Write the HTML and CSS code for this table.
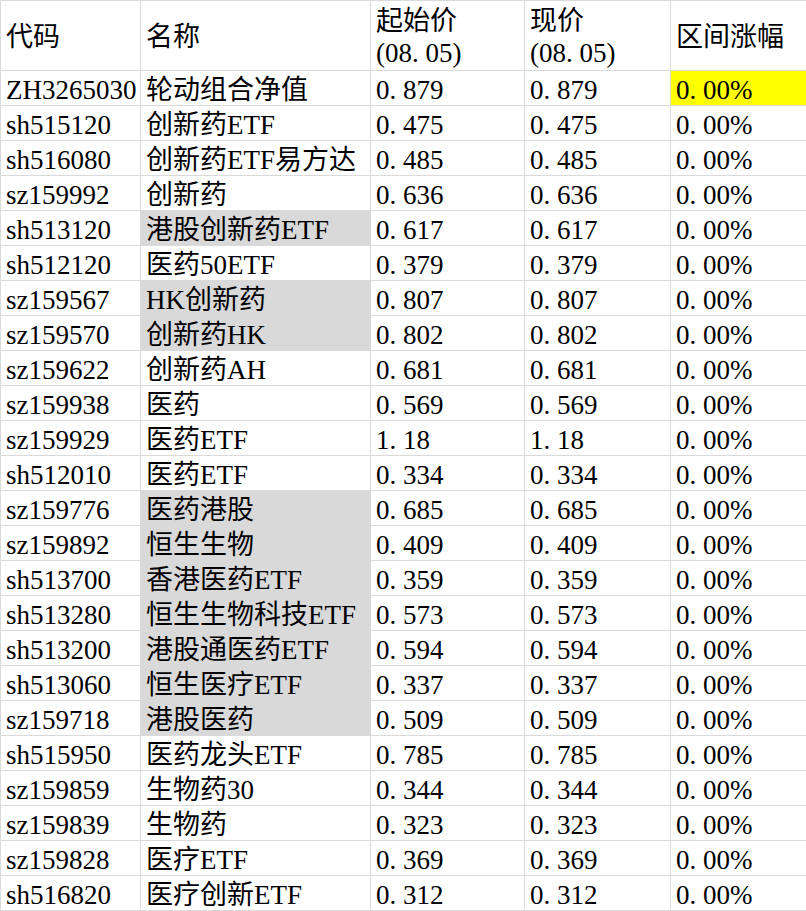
FILE: index.html
```html
<!DOCTYPE html>
<html lang="zh-CN">
<head>
<meta charset="utf-8">
<title>区间涨幅</title>
<link rel="stylesheet" href="styles.css">
</head>
<body>
<div class="sheet">
  <div class="c h">代码</div>
  <div class="c h">名称</div>
  <div class="c h two">起始价<br>(08<span class="p">.</span>05)</div>
  <div class="c h two">现价<br>(08<span class="p">.</span>05)</div>
  <div class="c h">区间涨幅</div>

  <div class="c">ZH3265030</div><div class="c">轮动组合净值</div><div class="c">0<span class="p">.</span>879</div><div class="c">0<span class="p">.</span>879</div><div class="c hl">0<span class="p">.</span>00%</div>
  <div class="c">sh515120</div><div class="c">创新药ETF</div><div class="c">0<span class="p">.</span>475</div><div class="c">0<span class="p">.</span>475</div><div class="c">0<span class="p">.</span>00%</div>
  <div class="c">sh516080</div><div class="c">创新药ETF易方达</div><div class="c">0<span class="p">.</span>485</div><div class="c">0<span class="p">.</span>485</div><div class="c">0<span class="p">.</span>00%</div>
  <div class="c">sz159992</div><div class="c">创新药</div><div class="c">0<span class="p">.</span>636</div><div class="c">0<span class="p">.</span>636</div><div class="c">0<span class="p">.</span>00%</div>
  <div class="c">sh513120</div><div class="c g">港股创新药ETF</div><div class="c">0<span class="p">.</span>617</div><div class="c">0<span class="p">.</span>617</div><div class="c">0<span class="p">.</span>00%</div>
  <div class="c">sh512120</div><div class="c">医药50ETF</div><div class="c">0<span class="p">.</span>379</div><div class="c">0<span class="p">.</span>379</div><div class="c">0<span class="p">.</span>00%</div>
  <div class="c">sz159567</div><div class="c g">HK创新药</div><div class="c">0<span class="p">.</span>807</div><div class="c">0<span class="p">.</span>807</div><div class="c">0<span class="p">.</span>00%</div>
  <div class="c">sz159570</div><div class="c g">创新药HK</div><div class="c">0<span class="p">.</span>802</div><div class="c">0<span class="p">.</span>802</div><div class="c">0<span class="p">.</span>00%</div>
  <div class="c">sz159622</div><div class="c">创新药AH</div><div class="c">0<span class="p">.</span>681</div><div class="c">0<span class="p">.</span>681</div><div class="c">0<span class="p">.</span>00%</div>
  <div class="c">sz159938</div><div class="c">医药</div><div class="c">0<span class="p">.</span>569</div><div class="c">0<span class="p">.</span>569</div><div class="c">0<span class="p">.</span>00%</div>
  <div class="c">sz159929</div><div class="c">医药ETF</div><div class="c">1<span class="p">.</span>18</div><div class="c">1<span class="p">.</span>18</div><div class="c">0<span class="p">.</span>00%</div>
  <div class="c">sh512010</div><div class="c">医药ETF</div><div class="c">0<span class="p">.</span>334</div><div class="c">0<span class="p">.</span>334</div><div class="c">0<span class="p">.</span>00%</div>
  <div class="c">sz159776</div><div class="c g">医药港股</div><div class="c">0<span class="p">.</span>685</div><div class="c">0<span class="p">.</span>685</div><div class="c">0<span class="p">.</span>00%</div>
  <div class="c">sz159892</div><div class="c g">恒生生物</div><div class="c">0<span class="p">.</span>409</div><div class="c">0<span class="p">.</span>409</div><div class="c">0<span class="p">.</span>00%</div>
  <div class="c">sh513700</div><div class="c g">香港医药ETF</div><div class="c">0<span class="p">.</span>359</div><div class="c">0<span class="p">.</span>359</div><div class="c">0<span class="p">.</span>00%</div>
  <div class="c">sh513280</div><div class="c g">恒生生物科技ETF</div><div class="c">0<span class="p">.</span>573</div><div class="c">0<span class="p">.</span>573</div><div class="c">0<span class="p">.</span>00%</div>
  <div class="c">sh513200</div><div class="c g">港股通医药ETF</div><div class="c">0<span class="p">.</span>594</div><div class="c">0<span class="p">.</span>594</div><div class="c">0<span class="p">.</span>00%</div>
  <div class="c">sh513060</div><div class="c g">恒生医疗ETF</div><div class="c">0<span class="p">.</span>337</div><div class="c">0<span class="p">.</span>337</div><div class="c">0<span class="p">.</span>00%</div>
  <div class="c">sz159718</div><div class="c g">港股医药</div><div class="c">0<span class="p">.</span>509</div><div class="c">0<span class="p">.</span>509</div><div class="c">0<span class="p">.</span>00%</div>
  <div class="c">sh515950</div><div class="c">医药龙头ETF</div><div class="c">0<span class="p">.</span>785</div><div class="c">0<span class="p">.</span>785</div><div class="c">0<span class="p">.</span>00%</div>
  <div class="c">sz159859</div><div class="c">生物药30</div><div class="c">0<span class="p">.</span>344</div><div class="c">0<span class="p">.</span>344</div><div class="c">0<span class="p">.</span>00%</div>
  <div class="c">sz159839</div><div class="c">生物药</div><div class="c">0<span class="p">.</span>323</div><div class="c">0<span class="p">.</span>323</div><div class="c">0<span class="p">.</span>00%</div>
  <div class="c">sz159828</div><div class="c">医疗ETF</div><div class="c">0<span class="p">.</span>369</div><div class="c">0<span class="p">.</span>369</div><div class="c">0<span class="p">.</span>00%</div>
  <div class="c">sh516820</div><div class="c">医疗创新ETF</div><div class="c">0<span class="p">.</span>312</div><div class="c">0<span class="p">.</span>312</div><div class="c">0<span class="p">.</span>00%</div>
</div>
</body>
</html>
```
FILE: styles.css
```css
html, body {
  margin: 0;
  padding: 0;
  background: #ffffff;
}

.sheet {
  display: grid;
  grid-template-columns: 139px 229px 153px 145px 135px;
  grid-template-rows: 69px;
  grid-auto-rows: 34px;
  gap: 1px;
  padding: 1px 0 1px 1px;
  width: 805px;
  background: #dadada;
  font-family: "Liberation Serif", "Noto Sans CJK SC", serif;
  font-size: 27px;
  color: #000000;
}

.c {
  background: #ffffff;
  padding: 0 0 0 5px;
  line-height: 34px;
  white-space: nowrap;
  overflow: hidden;
  display: flex;
  align-items: center;
  padding-top: 3px;
  box-sizing: border-box;
}

.h {
  line-height: 33px;
  padding-top: 4px;
}

.two {
  display: block;
  line-height: 32px;
  padding-top: 4px;
}

.p {
  display: inline-block;
  width: 0.5em;
}

.g {
  background: #d9d9d9;
  outline: 1px solid #d9d9d9;
}

.hl {
  background: #ffff00;
}
```
